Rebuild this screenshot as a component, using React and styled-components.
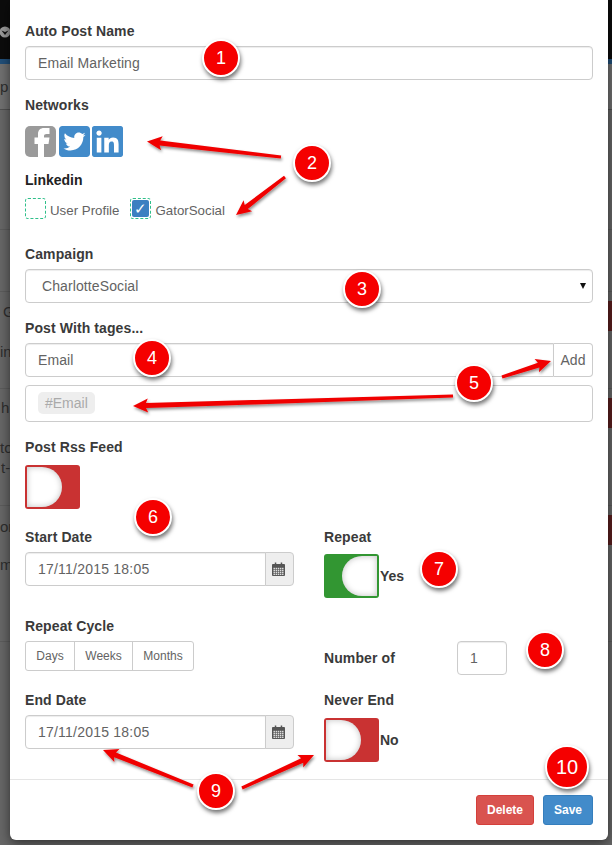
import React from "react";
import styled, { createGlobalStyle } from "styled-components";
import { FaTwitterSquare, FaLinkedin } from "react-icons/fa";

const GlobalStyle = createGlobalStyle`
  html, body {
    margin: 0;
    padding: 0;
    background: #666;
    font-family: "Liberation Sans", Arial, sans-serif;
  }
  * {
    box-sizing: border-box;
  }
`;

const Page = styled.div`
  position: relative;
  width: 612px;
  height: 845px;
  overflow: hidden;
  background: #676767;
`;

/* the dimmed page behind the modal */
const TopBar = styled.div`
  height: 64px;
  background: #0c0c0c;
  padding-top: 26px;
  border-bottom: 5px solid #214f79;

  svg {
    display: block;
  }
`;

const ToolBar = styled.div`
  height: 46px;
  background: #707070;
  border-bottom: 1px solid #505050;
  display: flex;
  align-items: center;
`;

const Row = styled.div`
  height: ${(p) => p.$height}px;
  padding-top: ${(p) => p.$top}px;
  border-bottom: 1px solid #5c5c5c;
  display: flex;
  justify-content: space-between;
  align-items: flex-start;
`;

const Fragments = styled.div`
  width: 10px;
`;

const Fragment = styled.div`
  white-space: nowrap;
  height: 20px;
  margin-top: ${(p) => p.$gap || 0}px;
  padding-left: ${(p) => p.$left || 0}px;
  font-size: 15px;
  line-height: 20px;
  color: #2e2e2e;
`;

const RowAction = styled.div`
  width: 40px;
  height: 30px;
  background: #5a1e1e;
`;

const Modal = styled.div`
  position: absolute;
  left: 10px;
  top: 0;
  width: 598px;
  height: 840px;
  background: #fff;
  border-radius: 0 0 6px 6px;
  box-shadow: 0 3px 12px rgba(0, 0, 0, 0.55);
  display: flex;
  flex-direction: column;
`;

const Body = styled.div`
  flex: 1;
  padding: 21px 15px 0;
`;

const Field = styled.div`
  margin-bottom: ${(p) => (p.$mb === undefined ? 15 : p.$mb)}px;
`;

const Label = styled.div`
  font-size: 14px;
  font-weight: 700;
  line-height: 20px;
  letter-spacing: 0.1px;
  color: #3a3a3a;
  margin-bottom: ${(p) => (p.$mb === undefined ? 5 : p.$mb)}px;
`;

const Box = styled.div`
  height: 34px;
  border: 1px solid #ccc;
  border-radius: 4px;
  padding: 0 12px;
  display: flex;
  align-items: center;
  justify-content: space-between;
  font-size: 14px;
  letter-spacing: 0.1px;
  color: #636363;
  background: #fff;
  box-shadow: inset 0 1px 1px rgba(0, 0, 0, 0.075);
`;

const SelectBox = styled(Box)`
  padding: 0 6px 0 16px;
`;

const Caret = styled.span`
  width: 0;
  height: 0;
  border-left: 3.5px solid transparent;
  border-right: 3.5px solid transparent;
  border-top: 6px solid #111;
`;

const Group = styled.div`
  display: flex;
  height: 34px;
`;

const GroupBox = styled(Box)`
  flex: 1;
  border-radius: 4px 0 0 4px;
`;

const DateBox = styled(GroupBox)`
  letter-spacing: 0.22px;
`;

const Addon = styled.div`
  width: ${(p) => p.$width}px;
  display: flex;
  align-items: center;
  justify-content: center;
  padding-right: ${(p) => p.$pr || 0}px;
  border: 1px solid #ccc;
  border-left: ${(p) => (p.$bg ? "1px solid #ccc" : "0")};
  border-radius: 0 4px 4px 0;
  margin-left: ${(p) => (p.$bg ? "-1px" : "0")};
  background: ${(p) => p.$bg || "#fff"};
  font-size: 14px;
  color: #636363;
`;

const TagBox = styled.div`
  height: 37px;
  margin-top: 8px;
  border: 1px solid #ccc;
  border-radius: 4px;
  padding: 6px 12px;
`;

const Tag = styled.span`
  display: inline-block;
  height: 22px;
  line-height: 22px;
  padding: 0 7px;
  border-radius: 5px;
  background: #eee;
  color: #aaa;
  font-size: 14px;
`;

const Networks = styled.div`
  display: flex;
  gap: 2.5px;
  margin-top: 11px;
  margin-bottom: 13px;
`;

const netIcon = `
  width: 31px;
  height: 31px;
  display: block;
`;

const FacebookMark = styled.svg`
  ${netIcon}
`;

const Twitter = styled(FaTwitterSquare)`
  ${netIcon}
  color: #428bca;
`;

const Linkedin = styled(FaLinkedin)`
  ${netIcon}
  color: #428bca;
`;

const SubLabel = styled.div`
  font-size: 14px;
  font-weight: 700;
  line-height: 20px;
  color: #222;
`;

const Checks = styled.div`
  display: flex;
  align-items: center;
  margin-top: 8px;
  margin-bottom: 25px;
  height: 21px;
  font-size: 13.3px;
  color: #636363;
`;

const Check = styled.span`
  width: 21px;
  height: 21px;
  border: 1px dashed #2fbf8a;
  border-radius: 3px;
  padding: 1px;
  display: flex;
  margin-right: 4px;
`;

const CheckFill = styled.span`
  flex: 1;
  background: #3d7fc1;
  border-radius: 2px;
  color: #fff;
  font-size: 15px;
  line-height: 17px;
  text-align: center;
`;

const CheckText = styled.span`
  margin-right: 11px;
  padding-top: 3px;
`;

const Toggle = styled.div`
  width: 55px;
  height: 44px;
  padding: 2px;
  border-radius: 3px;
  display: flex;
  justify-content: ${(p) => (p.$on ? "flex-end" : "flex-start")};
  background: ${(p) => (p.$on ? "#329632" : "#c93232")};
`;

const Knob = styled.div`
  width: 35px;
  height: 40px;
  background: #fff;
  border-radius: ${(p) => (p.$on ? "20px 0 0 20px" : "0 20px 20px 0")};
  box-shadow: inset 0 0 6px rgba(0, 0, 0, 0.25);
`;

const Columns = styled.div`
  display: grid;
  grid-template-columns: 269px 269px;
  grid-template-rows: 89px 74px auto;
  column-gap: 30px;
`;

const ToggleLine = styled.div`
  display: flex;
  align-items: center;
  gap: 1px;
  margin-top: ${(p) => p.$top}px;
  font-size: 14px;
  font-weight: 700;
  color: #3a3a3a;
`;

const Segments = styled.div`
  display: inline-flex;
  height: 30px;
  border: 1px solid #ccc;
  border-radius: 3px;
`;

const Segment = styled.div`
  width: ${(p) => p.$width}px;
  display: flex;
  align-items: center;
  justify-content: center;
  font-size: 12px;
  color: #636363;
  border-left: ${(p) => (p.$first ? "0" : "1px solid #ccc")};
`;

const NumberRow = styled.div`
  display: flex;
  align-items: center;
  align-self: start;
  margin-top: 25px;
`;

const NumberLabel = styled(Label)`
  width: 133px;
  margin-bottom: 0;
`;

const NumberBox = styled(Box)`
  width: 50px;
`;

const Footer = styled.div`
  height: 61px;
  border-top: 1px solid #e5e5e5;
  padding: 15px;
  display: flex;
  justify-content: flex-end;
  gap: 9px;
`;

const Button = styled.div`
  width: ${(p) => p.$width}px;
  height: 30px;
  display: flex;
  align-items: center;
  justify-content: center;
  border-radius: 3px;
  border: 1px solid ${(p) => p.$border};
  background: ${(p) => p.$bg};
  color: #fff;
  font-size: 12px;
  font-weight: 700;
`;

/* screenshot annotations on top of the form */
const Badge = styled.div`
  position: absolute;
  left: ${(p) => p.$x - p.$size / 2}px;
  top: ${(p) => p.$y - p.$size / 2}px;
  width: ${(p) => p.$size}px;
  height: ${(p) => p.$size}px;
  border-radius: 50%;
  background: #f50000;
  border: 2px solid #fff;
  box-shadow: 1px 3px 4px rgba(0, 0, 0, 0.55);
  color: #fff;
  font-size: ${(p) => (p.$size > 40 ? 20 : 18)}px;
  display: flex;
  align-items: center;
  justify-content: center;
`;

const Overlay = styled.svg`
  position: absolute;
  left: 0;
  top: 0;
  width: 612px;
  height: 845px;
  pointer-events: none;
`;

const ARROWS = [
  [281, 157, 147, 141.5],
  [285, 177, 236, 215],
  [453, 396, 133, 406],
  [502, 377, 551, 361],
  [193, 786, 103, 750],
  [242, 788, 314, 755],
];

const BADGES = [
  [1, 221, 58, 38],
  [2, 312, 163, 38],
  [3, 362, 289, 38],
  [4, 152, 358, 38],
  [5, 474, 383, 38],
  [6, 153, 517, 38],
  [7, 439, 569, 38],
  [8, 545, 650, 38],
  [9, 216, 791, 38],
  [10, 567, 767, 44],
];

function arrowPoints([x1, y1, x2, y2]) {
  const len = Math.hypot(x2 - x1, y2 - y1);
  const ux = (x2 - x1) / len;
  const uy = (y2 - y1) / len;
  const nx = -uy;
  const ny = ux;
  const at = (along, side) =>
    `${x2 - ux * along + nx * side},${y2 - uy * along + ny * side}`;
  return [
    at(0, 0),
    at(15, 7),
    at(13, 2.5),
    at(len, 1.6),
    at(len, -1.6),
    at(13, -2.5),
    at(15, -7),
  ].join(" ");
}

function CalendarIcon() {
  const cells = [];
  for (let r = 0; r < 4; r++) {
    for (let c = 0; c < 5; c++) {
      cells.push(
        <rect key={r + "-" + c} x={1.6 + c * 2.3} y={6.2 + r * 2.1} width="1.6" height="1.5" fill="#ddd" />
      );
    }
  }
  return (
    <svg width="13" height="14" viewBox="0 0 14 15">
      <path d="M1 2h2V0.5h1.6V2h4.8V0.5H11V2h2a1 1 0 0 1 1 1v11a1 1 0 0 1-1 1H1a1 1 0 0 1-1-1V3a1 1 0 0 1 1-1z" fill="#555" />
      {cells}
    </svg>
  );
}

function FacebookIcon() {
  return (
    <FacebookMark viewBox="0 0 31 31">
      <rect width="31" height="31" rx="5" fill="#9a9a9a" />
      <path d="M13 31V18H9.5v-6.5H13V8c0-4 2.5-6 6-6h5.5v6H21.5c-1.6 0-2.5.7-2.5 2.2v1.3h5.5l-1 6.5H19v13z" fill="#fff" />
    </FacebookMark>
  );
}

function DateField({ value }) {
  return (
    <Group>
      <DateBox>{value}</DateBox>
      <Addon $width={29} $bg="#eee" $pr={2}>
        <CalendarIcon />
      </Addon>
    </Group>
  );
}

export default function App() {
  return (
    <Page>
      <GlobalStyle />
      <TopBar>
        <svg width="10" height="12" viewBox="0 0 10 12">
          <circle cx="5" cy="6" r="5.5" fill="#9a9a9a" />
          <path d="M1.5 4.5L5 9l3.5-4.5L5 6z" fill="#111" />
        </svg>
      </TopBar>
      <ToolBar>
        <Fragments>
          <Fragment>p</Fragment>
        </Fragments>
      </ToolBar>
      <Row $height={120} $top={0} />
      <Row $height={62} $top={0} />
      <Row $height={97} $top={9}>
        <Fragments>
          <Fragment $gap={1} $left={3}>G</Fragment>
          <Fragment $gap={20}>in</Fragment>
        </Fragments>
        <RowAction />
      </Row>
      <Row $height={117} $top={9}>
        <Fragments>
          <Fragment $left={1}>h</Fragment>
          <Fragment $gap={20}>to</Fragment>
          <Fragment $left={1}>t-</Fragment>
        </Fragments>
        <RowAction />
      </Row>
      <Row $height={136} $top={9}>
        <Fragments>
          <Fragment $gap={2}>or</Fragment>
          <Fragment $gap={18}>m</Fragment>
        </Fragments>
        <RowAction />
      </Row>

      <Modal>
        <Body>
          <Field>
            <Label>Auto Post Name</Label>
            <Box>Email Marketing</Box>
          </Field>

          <Label $mb={0}>Networks</Label>
          <Networks>
            <FacebookIcon />
            <Twitter viewBox="0 32 448 448" />
            <Linkedin viewBox="0 32 448 448" />
          </Networks>
          <SubLabel>Linkedin</SubLabel>
          <Checks>
            <Check />
            <CheckText>User Profile</CheckText>
            <Check>
              <CheckFill>✓</CheckFill>
            </Check>
            <CheckText>GatorSocial</CheckText>
          </Checks>

          <Field>
            <Label>Campaign</Label>
            <SelectBox>
              CharlotteSocial
              <Caret />
            </SelectBox>
          </Field>

          <Field>
            <Label>Post With tages...</Label>
            <Group>
              <GroupBox>Email</GroupBox>
              <Addon $width={39}>Add</Addon>
            </Group>
            <TagBox>
              <Tag>#Email</Tag>
            </TagBox>
          </Field>

          <Field $mb={18}>
            <Label $mb={8}>Post Rss Feed</Label>
            <Toggle>
              <Knob />
            </Toggle>
          </Field>

          <Columns>
            <div>
              <Label>Start Date</Label>
              <DateField value="17/11/2015 18:05" />
            </div>
            <div>
              <Label $mb={0}>Repeat</Label>
              <ToggleLine $top={7}>
                <Toggle $on>
                  <Knob $on />
                </Toggle>
                Yes
              </ToggleLine>
            </div>
            <div>
              <Label>Repeat Cycle</Label>
              <Segments>
                <Segment $first $width={48}>Days</Segment>
                <Segment $width={58}>Weeks</Segment>
                <Segment $width={61}>Months</Segment>
              </Segments>
            </div>
            <NumberRow>
              <NumberLabel>Number of</NumberLabel>
              <NumberBox>1</NumberBox>
            </NumberRow>
            <div>
              <Label>End Date</Label>
              <DateField value="17/11/2015 18:05" />
            </div>
            <div>
              <Label $mb={0}>Never End</Label>
              <ToggleLine $top={8}>
                <Toggle>
                  <Knob />
                </Toggle>
                No
              </ToggleLine>
            </div>
          </Columns>
        </Body>
        <Footer>
          <Button $width={58} $bg="#d9534f" $border="#d43f3a">Delete</Button>
          <Button $width={50} $bg="#428bca" $border="#357ebd">Save</Button>
        </Footer>
      </Modal>

      <Overlay viewBox="0 0 612 845">
        <defs>
          <filter id="arrowShadow" x="-20%" y="-40%" width="140%" height="200%">
            <feDropShadow dx="1" dy="2" stdDeviation="1.5" floodColor="#000" floodOpacity="0.45" />
          </filter>
        </defs>
        {ARROWS.map((a, i) => (
          <polygon key={i} points={arrowPoints(a)} fill="#f00000" filter="url(#arrowShadow)" />
        ))}
      </Overlay>
      {BADGES.map(([n, x, y, size]) => (
        <Badge key={n} $x={x} $y={y} $size={size}>
          {n}
        </Badge>
      ))}
    </Page>
  );
}
